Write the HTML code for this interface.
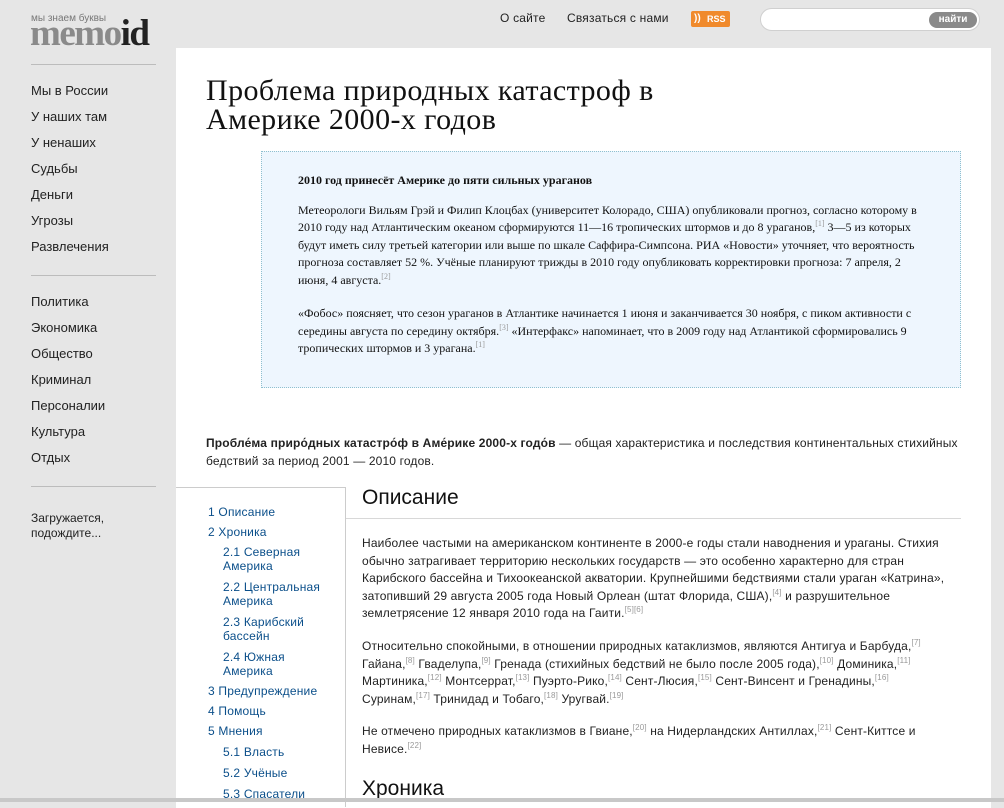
<!DOCTYPE html>
<html><head><meta charset="utf-8">
<style>
*{margin:0;padding:0;box-sizing:border-box}
body{width:1004px;height:802px;overflow:hidden;background:#e6e6e6;font-family:"Liberation Sans",sans-serif;color:#222;position:relative}
.a{position:absolute}
.nav a{display:block;color:#222;font-size:13px;height:26px;text-decoration:none}
.hr{position:absolute;left:31px;width:125px;height:1px;background:#bcbcbc}
.white{position:absolute;left:176px;top:48px;width:815px;height:760px;background:#fff}
.q{position:absolute;left:261px;top:151px;width:700px;height:237px;background:#eef6fe;border:1px dotted #8fc0cf;font-family:"Liberation Serif",serif;font-size:12px;line-height:17.5px;color:#111;padding:20px 36px 0 36px}
sup{font-size:8px;color:#999;vertical-align:5px;line-height:0}
.txt{font-size:12px;line-height:17.6px;color:#222;letter-spacing:0.15px;white-space:nowrap}
.toc a{display:block;color:#0b4f8a;font-size:12px;line-height:14px;text-decoration:none;letter-spacing:0.2px}
</style></head><body>
<div class="a" style="left:31px;top:13px;font-size:10px;color:#777">мы знаем буквы</div>
<div class="a" style="left:30px;top:12px;font-family:'Liberation Serif',serif;font-size:37px;font-weight:bold;letter-spacing:-1.5px;color:#8a8a8a">memo<span style="color:#222">id</span></div>
<div class="hr" style="top:64px"></div>
<div class="nav a" style="left:31px;top:83px"><a>Мы в России</a><a>У наших там</a><a>У ненаших</a><a>Судьбы</a><a>Деньги</a><a>Угрозы</a><a>Развлечения</a></div>
<div class="hr" style="top:275px"></div>
<div class="nav a" style="left:31px;top:294px"><a>Политика</a><a>Экономика</a><a>Общество</a><a>Криминал</a><a>Персоналии</a><a>Культура</a><a>Отдых</a></div>
<div class="hr" style="top:486px"></div>
<div class="a" style="left:31px;top:511px;font-size:12px;line-height:15px">Загружается,<br>подождите...</div>
<div class="a" style="left:500px;top:11px;font-size:12px;letter-spacing:0.2px">О сайте</div>
<div class="a" style="left:567px;top:11px;font-size:12px;letter-spacing:0.2px">Связаться с нами</div>
<div class="a" style="left:691px;top:11px;width:39px;height:16px;background:#f08a2c;border-radius:2px;color:#fff;font-size:9px;font-weight:bold;line-height:16px;padding-left:16px">RSS<span class="a" style="left:3px;top:3px;width:10px;height:10px;color:#fff;font-size:10px;line-height:10px">))</span></div>
<div class="a" style="left:760px;top:8px;width:220px;height:23px;background:#fff;border:1px solid #d0d0d0;border-radius:12px"></div>
<div class="a" style="left:929px;top:12px;width:48px;height:16px;background:#8a8a8a;border-radius:8px;color:#fff;font-size:10px;font-weight:bold;text-align:center;line-height:16px">найти</div>
<div class="white"></div>
<div class="a" style="left:206px;top:76px;font-family:'Liberation Serif',serif;font-size:30px;line-height:29px;letter-spacing:0.4px;color:#111">Проблема природных катастроф в<br>Америке 2000-х годов</div>
<div class="q"><div style="font-weight:bold;margin-bottom:12px">2010 год принесёт Америке до пяти сильных ураганов</div>
<div>Метеорологи Вильям Грэй и Филип Клоцбах (университет Колорадо, США) опубликовали прогноз, согласно которому в 2010 году над Атлантическим океаном сформируются 11—16 тропических штормов и до 8 ураганов,<sup>[1]</sup> 3—5 из которых будут иметь силу третьей категории или выше по шкале Саффира-Симпсона. РИА «Новости» уточняет, что вероятность прогноза составляет 52 %. Учёные планируют трижды в 2010 году опубликовать корректировки прогноза: 7 апреля, 2 июня, 4 августа.<sup>[2]</sup></div>
<div style="margin-top:16px">«Фобос» поясняет, что сезон ураганов в Атлантике начинается 1 июня и заканчивается 30 ноября, с пиком активности с середины августа по середину октября.<sup>[3]</sup> «Интерфакс» напоминает, что в 2009 году над Атлантикой сформировались 9 тропических штормов и 3 урагана.<sup>[1]</sup></div></div>
<div class="a txt" style="left:206px;top:435px">
<b>Пробле́ма приро́дных катастро́ф в Аме́рике 2000-х годо́в</b> — общая характеристика и последствия континентальных стихийных<br>бедствий за период 2001 — 2010 годов.</div>
<div class="a" style="left:176px;top:487px;width:170px;height:320px;border-top:1px solid #ccc;border-right:1px solid #ccc"></div>
<div class="toc a" style="left:208px;top:505px"><a style="margin-bottom:6px">1 Описание</a><a style="margin-bottom:6px">2 Хроника</a>
<div style="padding-left:15px"><a style="margin-bottom:7px">2.1 Северная<br>Америка</a><a style="margin-bottom:7px">2.2 Центральная<br>Америка</a><a style="margin-bottom:7px">2.3 Карибский<br>бассейн</a><a style="margin-bottom:6px">2.4 Южная<br>Америка</a></div>
<a style="margin-bottom:6px">3 Предупреждение</a><a style="margin-bottom:6px">4 Помощь</a><a style="margin-bottom:7px">5 Мнения</a>
<div style="padding-left:15px"><a style="margin-bottom:7px">5.1 Власть</a><a style="margin-bottom:7px">5.2 Учёные</a><a>5.3 Спасатели</a></div></div>
<div class="a" style="left:362px;top:486px;font-size:21px;color:#111">Описание</div>
<div class="a" style="left:346px;top:518px;width:615px;height:1px;background:#d8d8d8"></div>
<div class="a txt" style="left:362px;top:535px">
<p>Наиболее частыми на американском континенте в 2000-е годы стали наводнения и ураганы. Стихия<br>обычно затрагивает территорию нескольких государств — это особенно характерно для стран<br>Карибского бассейна и Тихоокеанской акватории. Крупнейшими бедствиями стали ураган «Катрина»,<br>затопивший 29 августа 2005 года Новый Орлеан (штат Флорида, США),<sup>[4]</sup> и разрушительное<br>землетрясение 12 января 2010 года на Гаити.<sup>[5][6]</sup></p>
<p style="margin-top:15px">Относительно спокойными, в отношении природных катаклизмов, являются Антигуа и Барбуда,<sup>[7]</sup><br>Гайана,<sup>[8]</sup> Гваделупа,<sup>[9]</sup> Гренада (стихийных бедствий не было после 2005 года),<sup>[10]</sup> Доминика,<sup>[11]</sup><br>Мартиника,<sup>[12]</sup> Монтсеррат,<sup>[13]</sup> Пуэрто-Рико,<sup>[14]</sup> Сент-Люсия,<sup>[15]</sup> Сент-Винсент и Гренадины,<sup>[16]</sup><br>Суринам,<sup>[17]</sup> Тринидад и Тобаго,<sup>[18]</sup> Уругвай.<sup>[19]</sup></p>
<p style="margin-top:15px">Не отмечено природных катаклизмов в Гвиане,<sup>[20]</sup> на Нидерландских Антиллах,<sup>[21]</sup> Сент-Киттсе и<br>Невисе.<sup>[22]</sup></p></div>
<div class="a" style="left:362px;top:777px;font-size:21px;color:#111">Хроника</div>
<div class="a" style="left:0;top:798px;width:1004px;height:4px;background:#c8c8c8"></div>
</body></html>
